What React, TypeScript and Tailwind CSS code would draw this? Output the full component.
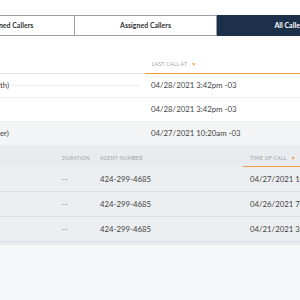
const mainRows = [
  { name: "th)", date: "04/28/2021 3:42pm -03", bg: "bg-white", line: true },
  { name: "", date: "04/28/2021 3:42pm -03", bg: "bg-white", line: false },
  { name: "er)", date: "04/27/2021 10:20am -03", bg: "bg-[#f3f4f6]", line: false },
];

const calls = [
  { duration: "--", agent: "424-299-4685", time: "04/27/2021 10:14am -03" },
  { duration: "--", agent: "424-299-4685", time: "04/26/2021 7:54pm -03" },
  { duration: "--", agent: "424-299-4685", time: "04/21/2021 3:37pm -03" },
];

const Caret = () => <span className="ml-[4px] text-[5px] text-[#f39a3c]">▼</span>;

export default function App() {
  return (
    <div className="h-[300px] w-[300px] overflow-hidden bg-[#f6f7f8] font-['Lato',sans-serif]">
      <div className="h-[15px] bg-white" />
      <div className="flex h-[21px] w-[300px] bg-white">
        <div className="-ml-[67px] flex w-[142px] shrink-0 items-center justify-center border border-[#9aa0a6] text-[7px] font-bold text-[#333]">
          Unassigned Callers
        </div>
        <div className="flex w-[142px] shrink-0 items-center justify-center border-y border-r border-[#9aa0a6] text-[7px] font-bold text-[#333]">
          Assigned Callers
        </div>
        <div className="flex w-[146px] shrink-0 items-center justify-center bg-[#1c3049] text-[7px] font-bold text-white">
          All Callers
        </div>
      </div>
      <div className="bg-white">
        <div className="flex h-[38px] items-end">
          <div className="h-[1px] w-[145px] bg-[#e3e5e8]" />
          <div className="flex-1 border-b-[1.5px] border-[#f39a3c] pb-[5px] pl-[7px] text-[5px] tracking-[0.3px] text-[#9a9da2]">
            LAST CALL AT
            <Caret />
          </div>
        </div>
        {mainRows.map((r, i) => (
          <div key={i} className={`flex h-[24px] items-center border-b border-[#eceef0] text-[7.8px] text-[#444] ${r.bg}`}>
            <div className="w-[145px] shrink-0">
              <span>{r.name}</span>
              {r.line && <span className="ml-[2px] inline-block h-[1px] w-[128px] bg-[#eceef0] align-middle" />}
            </div>
            <div className="whitespace-nowrap pl-[6px]">{r.date}</div>
          </div>
        ))}
      </div>
      <div className="bg-[#e9ecef]">
        <div className="flex h-[21px] items-end text-[5px] tracking-[0.3px] text-[#9a9da2]">
          <div className="w-[62px] shrink-0" />
          <div className="w-[38px] shrink-0 pb-[5px]">DURATION</div>
          <div className="w-[143px] shrink-0 pb-[5px]">AGENT NUMBER</div>
          <div className="flex-1 whitespace-nowrap border-b-[1.5px] border-[#f39a3c] pb-[4px] pl-[7px]">
            TIME OF CALL
            <Caret />
          </div>
        </div>
        {calls.map((c, i) => (
          <div key={i} className="flex h-[25px] items-center border-b border-[#dde0e4] bg-[#eceef1] pt-[2px] text-[7.8px] text-[#444]">
            <div className="w-[62px] shrink-0" />
            <div className="w-[38px] shrink-0 text-[#888]">{c.duration}</div>
            <div className="w-[150px] shrink-0">{c.agent}</div>
            <div className="whitespace-nowrap">{c.time}</div>
          </div>
        ))}
        <div className="h-[3px]" />
      </div>
    </div>
  );
}
